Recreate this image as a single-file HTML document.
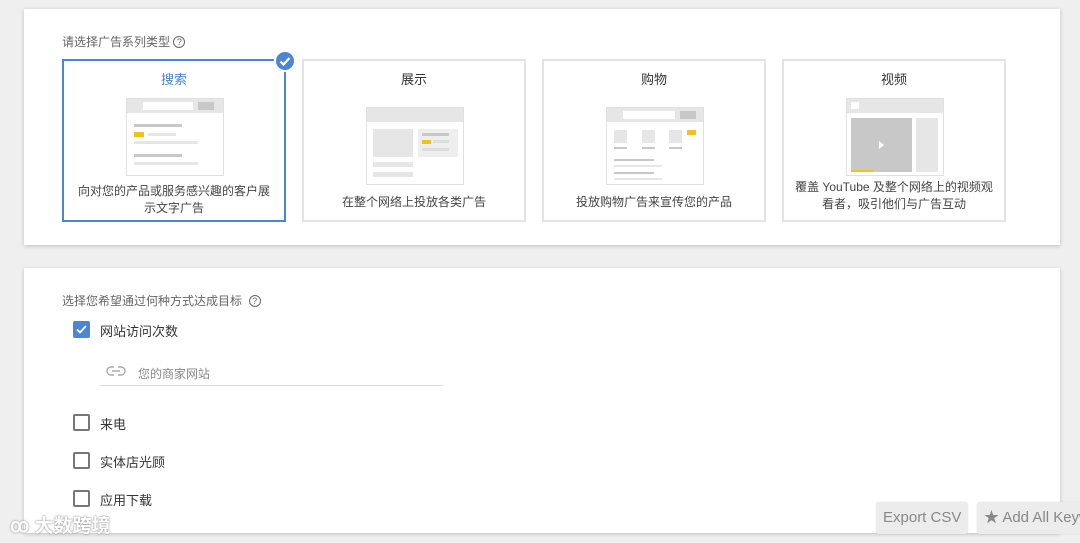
<!DOCTYPE html>
<html><head><meta charset="utf-8"><style>
*{margin:0;padding:0;box-sizing:border-box}
html,body{width:1080px;height:543px;overflow:hidden}
body{background:#efefef;font-family:"Liberation Sans","Noto Sans CJK SC",sans-serif;position:relative;color:#333}
.card{position:absolute;left:24px;width:1036px;background:#fff;box-shadow:0 1px 4px rgba(0,0,0,.2)}
.abs{position:absolute}
.tile{position:absolute;top:50px;width:224px;height:163px;border:2px solid #e3e3e3;background:#fff}
.tile.sel{border-color:#4a86d4}
.tt{position:absolute;top:8px;left:0;right:0;text-align:center;font-size:13px;color:#333}
.desc{position:absolute;left:0;right:0;text-align:center;font-size:12px;line-height:17px;color:#444}
.thumb{position:absolute;left:62px;width:98px;border:1px solid #e0e0e0;background:#fff}
.g{position:absolute;background:#e6e6e6}
.d{position:absolute;background:#c8c8c8}
.y{position:absolute;background:#f5bf1c}
.q{display:inline-block;width:12px;height:12px;border:1.3px solid #666;border-radius:50%;font-size:9px;line-height:10px;text-align:center;color:#666;vertical-align:1px}
.cb{position:absolute;left:49px;width:17px;height:17px;border:2px solid #777;border-radius:2px}
.lab{position:absolute;left:76px;font-size:13px;color:#333}
.btn{position:absolute;top:502px;height:32px;background:#ececec;border-radius:3px;font-size:15px;color:#888;line-height:32px;padding:0 7px;box-shadow:0 0 1px rgba(0,0,0,.2);white-space:nowrap;overflow:hidden}
</style></head><body>
<div class="card" style="top:9px;height:236px">
 <div class="abs" style="left:38px;top:24px;font-size:12px;color:#666">请选择广告系列类型 <span class="q">?</span></div>
 <div class="tile sel" style="left:38px">
  <div class="tt" style="color:#4a86d4">搜索</div>
  <div class="thumb" style="top:37px;height:78px">
   <div class="g" style="left:0;top:0;right:0;height:14px"></div>
   <div class="abs" style="left:16px;top:3px;width:50px;height:8px;background:#fff"></div>
   <div class="d" style="left:71px;top:3px;width:16px;height:8px"></div>
   <div class="d" style="left:7px;top:25px;width:48px;height:3px"></div>
   <div class="y" style="left:7px;top:33px;width:10px;height:5px"></div>
   <div class="g" style="left:21px;top:34px;width:28px;height:3px"></div>
   <div class="g" style="left:7px;top:42px;width:64px;height:3px"></div>
   <div class="d" style="left:7px;top:55px;width:48px;height:3px"></div>
   <div class="g" style="left:7px;top:63px;width:64px;height:3px"></div>
  </div>
  <div class="desc" style="top:122px">向对您的产品或服务感兴趣的客户展<br>示文字广告</div>
 </div>
 <div class="abs" style="left:250px;top:41px;width:22px;height:22px;border-radius:50%;background:#4a86d4;border:2px solid #fff">
  <svg width="18" height="18" viewBox="0 0 18 18" style="position:absolute;left:0;top:0"><path d="M4.5 9.5l3 3 6-6.5" stroke="#fff" stroke-width="2.2" fill="none"/></svg>
 </div>
 <div class="tile" style="left:278px">
  <div class="tt">展示</div>
  <div class="thumb" style="top:46px;height:78px">
   <div class="g" style="left:0;top:0;right:0;height:14px"></div>
   <div class="g" style="left:6px;top:21px;width:40px;height:28px"></div>
   <div class="g" style="left:51px;top:21px;width:40px;height:28px;background:#eee"></div>
   <div class="d" style="left:55px;top:25px;width:27px;height:3px"></div>
   <div class="y" style="left:55px;top:32px;width:9px;height:4px"></div>
   <div class="g" style="left:66px;top:32px;width:16px;height:3px;background:#ddd"></div>
   <div class="g" style="left:55px;top:40px;width:27px;height:3px;background:#ddd"></div>
   <div class="g" style="left:6px;top:54px;width:40px;height:5px"></div>
   <div class="g" style="left:6px;top:64px;width:40px;height:5px"></div>
  </div>
  <div class="desc" style="top:133px">在整个网络上投放各类广告</div>
 </div>
 <div class="tile" style="left:518px">
  <div class="tt">购物</div>
  <div class="thumb" style="top:46px;height:78px">
   <div class="g" style="left:0;top:0;right:0;height:14px"></div>
   <div class="abs" style="left:16px;top:3px;width:52px;height:8px;background:#fff"></div>
   <div class="d" style="left:73px;top:3px;width:16px;height:8px"></div>
   <div class="g" style="left:7px;top:22px;width:13px;height:13px"></div>
   <div class="g" style="left:35px;top:22px;width:13px;height:13px"></div>
   <div class="g" style="left:62px;top:22px;width:13px;height:13px"></div>
   <div class="y" style="left:80px;top:22px;width:9px;height:5px"></div>
   <div class="d" style="left:7px;top:39px;width:13px;height:2px"></div>
   <div class="d" style="left:35px;top:39px;width:13px;height:2px"></div>
   <div class="d" style="left:62px;top:39px;width:13px;height:2px"></div>
   <div class="d" style="left:7px;top:51px;width:40px;height:2px"></div>
   <div class="g" style="left:7px;top:57px;width:48px;height:2px"></div>
   <div class="d" style="left:7px;top:64px;width:40px;height:2px"></div>
   <div class="g" style="left:7px;top:70px;width:48px;height:2px"></div>
  </div>
  <div class="desc" style="top:133px">投放购物广告来宣传您的产品</div>
 </div>
 <div class="tile" style="left:758px">
  <div class="tt">视频</div>
  <div class="thumb" style="top:37px;height:78px">
   <div class="g" style="left:0;top:0;right:0;height:14px"></div>
   <div class="abs" style="left:4px;top:3px;width:8px;height:7px;background:#fff"></div>
   <div class="d" style="left:4px;top:19px;width:61px;height:54px"></div>
   <div class="y" style="left:4px;top:71px;width:22px;height:2px"></div>
   <div class="abs" style="left:32px;top:42px;width:0;height:0;border-left:5px solid #fff;border-top:4px solid transparent;border-bottom:4px solid transparent"></div>
   <div class="g" style="left:69px;top:19px;width:22px;height:54px"></div>
  </div>
  <div class="desc" style="top:118px">覆盖 YouTube 及整个网络上的视频观<br>看者，吸引他们与广告互动</div>
 </div>
</div>
<div class="card" style="top:268px;height:265px">
 <div class="abs" style="left:38px;top:24px;font-size:12px;color:#666">选择您希望通过何种方式达成目标 &nbsp;<span class="q">?</span></div>
 <div class="cb" style="top:53px;background:#4a86d4;border-color:#4a86d4"><svg width="13" height="13" viewBox="0 0 13 13" style="position:absolute;left:0;top:0"><path d="M2 6.5l3 3 6-6.5" stroke="#fff" stroke-width="1.8" fill="none"/></svg></div>
 <div class="lab" style="top:53px">网站访问次数</div>
 <svg class="abs" style="left:82px;top:98px" width="20" height="10" viewBox="0 0 20 10"><path d="M8 1H5a4 4 0 0 0 0 8h3M12 1h3a4 4 0 0 1 0 8h-3M6 5h8" stroke="#aaa" stroke-width="1.4" fill="none"/></svg>
 <div class="abs" style="left:114px;top:97px;font-size:12px;color:#888">您的商家网站</div>
 <div class="abs" style="left:76px;top:117px;width:343px;height:1px;background:#ddd"></div>
 <div class="cb" style="top:146px"></div><div class="lab" style="top:146px">来电</div>
 <div class="cb" style="top:184px"></div><div class="lab" style="top:184px">实体店光顾</div>
 <div class="cb" style="top:222px"></div><div class="lab" style="top:222px">应用下载</div>
</div>
<div class="abs" style="left:10px;top:511px;font-size:19px;color:#fff;font-weight:bold;text-shadow:0 0 2px #999,0 0 1px #888;white-space:nowrap">ꝏ 大数跨境</div>
<div class="btn" style="left:876px;width:92px">Export CSV</div>
<div class="btn" style="left:977px;width:120px">★ Add All Keywords</div>
</body></html>
